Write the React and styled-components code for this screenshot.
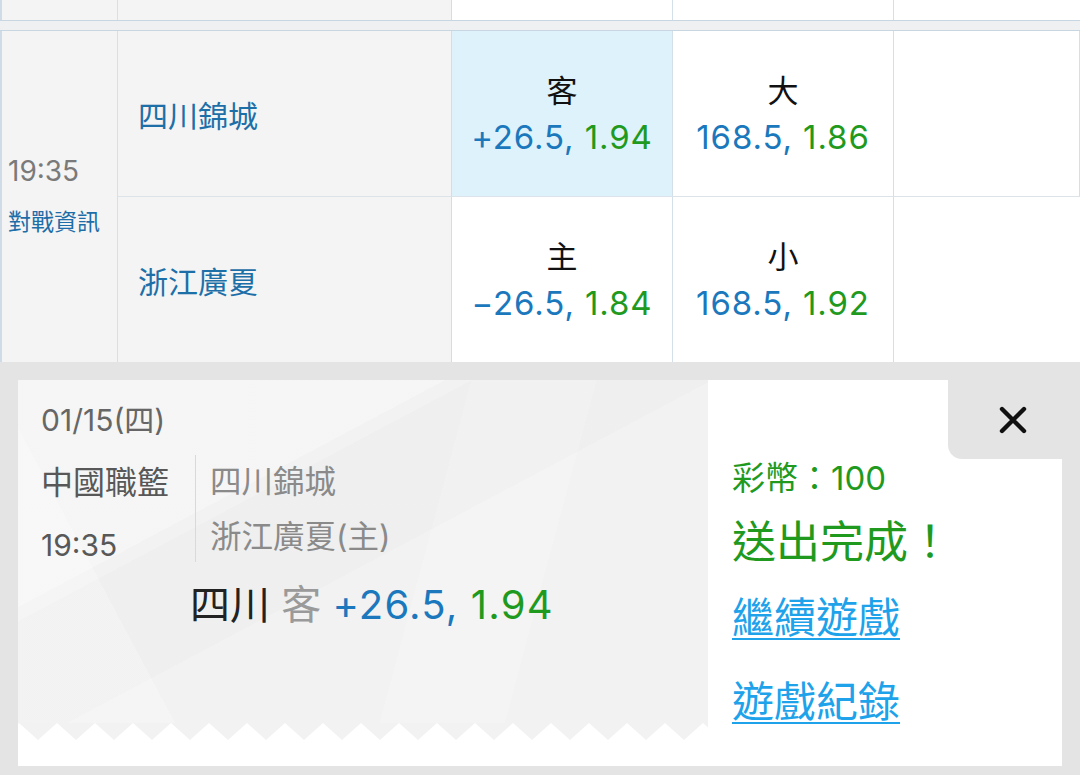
import React from 'react';
import styled, { createGlobalStyle } from 'styled-components';

const GlobalStyle = createGlobalStyle`
  html, body {
    margin: 0;
    padding: 0;
  }
  body {
    background: #e4e4e4;
    font-family: Inter, "Noto Sans CJK TC", sans-serif;
    overflow: hidden;
  }
  * {
    box-sizing: border-box;
  }
`;

const Page = styled.div`
  width: 1080px;
  height: 775px;
  overflow: hidden;
  display: flex;
  flex-direction: column;
`;

const Grid = styled.div`
  display: grid;
  grid-template-columns: 118px 334px 221px 221px 1fr;
  grid-template-rows: ${props => props.rows};
  background: #fff;
`;

const Cell = styled.div`
  background: ${props => props.bg || '#fff'};
  border-right: 1px solid ${props => props.line || '#d3e0ea'};
  border-bottom: ${props => (props.top ? '1px solid #dce4ea' : 'none')};
  &:first-child {
    box-shadow: inset 2px 0 0 #cfdbe6;
  }
  &:last-child {
    border-right: none;
  }
`;

const Separator = styled.div`
  height: 11px;
  background: #eef0f2;
  border-top: 1px solid #c8d6e2;
  border-bottom: 1px solid #c8d6e2;
`;

const TimeCell = styled(Cell)`
  grid-row: span 2;
  display: flex;
  flex-direction: column;
  justify-content: center;
  padding-left: 8px;
`;

const MatchTime = styled.div`
  font-size: 28px;
  line-height: 50px;
  color: #7a7a7a;
`;

const InfoLink = styled.div`
  font-size: 23px;
  line-height: 52px;
  color: #1d6ea8;
`;

const TeamCell = styled(Cell)`
  display: flex;
  align-items: center;
  padding-left: 20px;
  font-size: 30px;
  color: #1d6fa8;
`;

const OddsCell = styled(Cell)`
  display: flex;
  flex-direction: column;
  align-items: center;
  justify-content: center;
  background: ${props => (props.picked ? '#def2fb' : '#fff')};
  line-height: 47px;
`;

const OddsLabel = styled.div`
  font-size: 31px;
  color: #111;
`;

const OddsValue = styled.div`
  font-size: 33px;
  letter-spacing: 0.9px;
  white-space: nowrap;
`;

const Blue = styled.span`
  color: #1b78bc;
`;

const Green = styled.span`
  color: #1f9a1f;
`;

const Overlay = styled.div`
  flex: 1;
  background: #e4e4e4;
  padding: 18px 18px 0;
`;

const Ticket = styled.div`
  display: flex;
  height: 386px;
  background: #fff;
`;

const Stub = styled.div`
  width: 690px;
  display: flex;
  flex-direction: column;
  padding-bottom: 26px;
  background: #fff;
`;

const Facets = styled.div`
  flex: 1;
  padding: 20px 0 0 23px;
  background:
    linear-gradient(62deg, rgba(255, 255, 255, 0.22) 0 18%, transparent 18%),
    linear-gradient(-28deg, transparent 0 48%, rgba(0, 0, 0, 0.01) 48% 66%, transparent 66%),
    linear-gradient(152deg, rgba(255, 255, 255, 0.28) 0 32%, transparent 32%),
    linear-gradient(105deg, transparent 0 58%, rgba(255, 255, 255, 0.18) 58% 74%, transparent 74%),
    #f2f2f2;
`;

const DateLine = styled.div`
  font-size: 30px;
  line-height: 40px;
  color: #666;
`;

const InfoRow = styled.div`
  display: flex;
  height: 107px;
  margin-top: 15px;
`;

const LeagueCol = styled.div`
  width: 154px;
  display: flex;
  flex-direction: column;
  gap: 18px;
  padding-top: 6px;
  font-size: 32px;
  line-height: 44px;
  color: #585858;
`;

const LeagueTime = styled.div`
  font-size: 30px;
`;

const TeamsCol = styled.div`
  display: flex;
  flex-direction: column;
  gap: 11px;
  padding: 5px 0 0 14px;
  border-left: 1px solid #d9d9d9;
  font-size: 31.5px;
  line-height: 44px;
  color: #8a8a8a;
`;

const PickLine = styled.div`
  margin: 18px 0 0 149px;
  font-size: 40px;
  line-height: 50px;
  white-space: nowrap;
`;

const PickOdds = styled.span`
  letter-spacing: 1.2px;
`;

const PickTeam = styled.span`
  color: #222;
`;

const PickSide = styled.span`
  color: #9a9a9a;
`;

const Zigzag = styled.svg`
  display: block;
  width: 690px;
  height: 17px;
`;

const Side = styled.div`
  flex: 1;
  display: flex;
  flex-direction: column;
`;

const TabRow = styled.div`
  display: flex;
  justify-content: flex-end;
`;

const CloseTab = styled.button`
  width: 114px;
  height: 79px;
  border: none;
  padding: 0 0 0 16px;
  background: #e4e4e4;
  border-bottom-left-radius: 14px;
  display: flex;
  align-items: center;
  justify-content: center;
  cursor: pointer;
`;

const Result = styled.div`
  padding-left: 24px;
  display: flex;
  flex-direction: column;
  align-items: flex-start;
  color: #1f9a1f;
`;

const Coins = styled.div`
  font-size: 33px;
  line-height: 38px;
`;

const Done = styled.div`
  margin-top: 20px;
  font-size: 44px;
  line-height: 50px;
`;

const ActionLink = styled.a`
  margin-top: ${props => props.gap}px;
  font-size: 42px;
  line-height: 50px;
  color: #1ea2ea;
  text-decoration: underline;
  text-decoration-thickness: 2px;
  text-underline-offset: 5px;
  cursor: pointer;
`;

const rows = [
  { team: '四川錦城', side: '客', spread: '+26.5,', spreadOdds: '1.94', total: '大', line: '168.5,', totalOdds: '1.86', picked: true },
  { team: '浙江廣夏', side: '主', spread: '−26.5,', spreadOdds: '1.84', total: '小', line: '168.5,', totalOdds: '1.92' },
];

function CloseIcon() {
  return (
    <svg width="28" height="28" viewBox="0 0 28 28">
      <path d="M3 3 L25 25 M25 3 L3 25" stroke="#111" strokeWidth="4.4" strokeLinecap="round" />
    </svg>
  );
}

export default function App() {
  return (
    <Page>
      <GlobalStyle />
      <Grid rows="20px">
        <Cell bg="#f4f4f4" line="#dedede" />
        <Cell bg="#f4f4f4" line="#d3dde5" />
        <Cell />
        <Cell />
        <Cell />
      </Grid>
      <Separator />
      <Grid rows="166px 165px">
        <TimeCell bg="#f4f4f4" line="#dedede">
          <MatchTime>19:35</MatchTime>
          <InfoLink>對戰資訊</InfoLink>
        </TimeCell>
        {rows.map((row, i) => (
          <React.Fragment key={row.team}>
            <TeamCell bg="#f4f4f4" line="#d3dde5" top={i === 0}>{row.team}</TeamCell>
            <OddsCell top={i === 0} picked={row.picked}>
              <OddsLabel>{row.side}</OddsLabel>
              <OddsValue>
                <Blue>{row.spread}</Blue> <Green>{row.spreadOdds}</Green>
              </OddsValue>
            </OddsCell>
            <OddsCell top={i === 0}>
              <OddsLabel>{row.total}</OddsLabel>
              <OddsValue>
                <Blue>{row.line}</Blue> <Green>{row.totalOdds}</Green>
              </OddsValue>
            </OddsCell>
            <Cell top={i === 0} />
          </React.Fragment>
        ))}
      </Grid>

      <Overlay>
        <Ticket>
          <Stub>
            <Facets>
              <DateLine>01/15(四)</DateLine>
              <InfoRow>
                <LeagueCol>
                  <div>中國職籃</div>
                  <LeagueTime>19:35</LeagueTime>
                </LeagueCol>
                <TeamsCol>
                  <div>四川錦城</div>
                  <div>浙江廣夏(主)</div>
                </TeamsCol>
              </InfoRow>
              <PickLine>
                <PickTeam>四川</PickTeam> <PickSide>客</PickSide>{' '}
                <PickOdds>
                  <Blue>+26.5,</Blue> <Green>1.94</Green>
                </PickOdds>
              </PickLine>
            </Facets>
            <Zigzag viewBox="0 0 690 17">
              <defs>
                <pattern id="teeth" x="20" y="0" width="38" height="17" patternUnits="userSpaceOnUse">
                  <path d="M0 0 L0 17 L19 0 L38 17 L38 0 Z" fill="#f2f2f2" />
                </pattern>
              </defs>
              <rect width="690" height="17" fill="url(#teeth)" />
            </Zigzag>
          </Stub>
          <Side>
            <TabRow>
              <CloseTab aria-label="close">
                <CloseIcon />
              </CloseTab>
            </TabRow>
            <Result>
              <Coins>彩幣：100</Coins>
              <Done>送出完成！</Done>
              <ActionLink gap={26}>繼續遊戲</ActionLink>
              <ActionLink gap={34}>遊戲紀錄</ActionLink>
            </Result>
          </Side>
        </Ticket>
      </Overlay>
    </Page>
  );
}
